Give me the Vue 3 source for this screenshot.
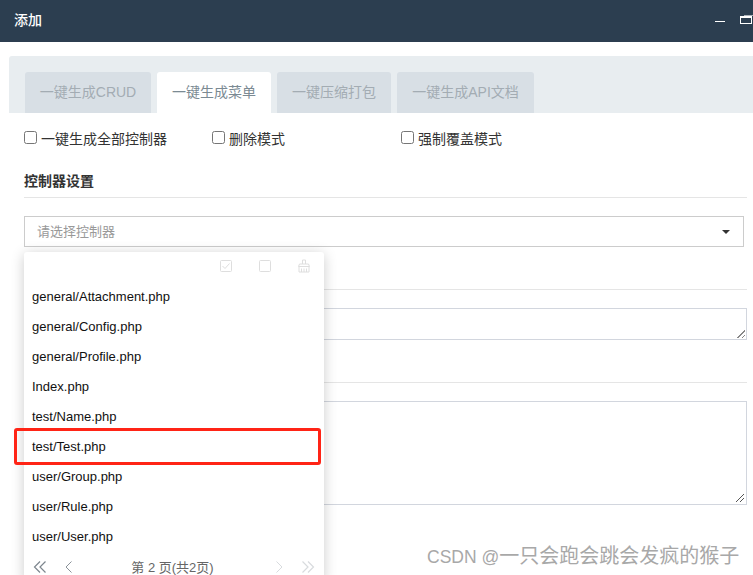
<script setup>
const tabs = [
  { label: '一键生成CRUD', w: 126 },
  { label: '一键生成菜单', w: 114, active: true },
  { label: '一键压缩打包', w: 114 },
  { label: '一键生成API文档', w: 137 },
]
const options = [
  { label: '一键生成全部控制器', w: 188 },
  { label: '删除模式', w: 189 },
  { label: '强制覆盖模式', w: 120 },
]
const files = [
  'general/Attachment.php',
  'general/Config.php',
  'general/Profile.php',
  'Index.php',
  'test/Name.php',
  'test/Test.php',
  'user/Group.php',
  'user/Rule.php',
  'user/User.php',
]
</script>

<template>
  <div class="page">
    <header class="titlebar">
      <span class="title">添加</span>
      <div class="win-btns">
        <span class="win-min"></span>
        <span class="win-max"></span>
      </div>
    </header>

    <main class="panel">
      <nav class="tabs">
        <div
          v-for="t in tabs"
          :key="t.label"
          class="tab"
          :class="{ active: t.active }"
          :style="{ width: t.w + 'px' }"
        >{{ t.label }}</div>
      </nav>

      <div class="body">
        <div class="checks">
          <label v-for="o in options" :key="o.label" class="check" :style="{ width: o.w + 'px' }">
            <span class="box"></span>{{ o.label }}
          </label>
        </div>

        <h4 class="section first">控制器设置</h4>
        <div class="select">
          <span class="placeholder">请选择控制器</span>
          <i class="caret"></i>
        </div>

        <div class="rule rule-a"></div>
        <div class="field short"></div>
        <div class="rule rule-b"></div>
        <div class="field tall">
          <svg class="grip" width="10" height="10" viewBox="0 0 10 10">
            <path d="M1 9 9 1M5 9 9 5" stroke="#555" stroke-width="1" fill="none" />
          </svg>
        </div>

        <div class="dropdown">
          <div class="tools">
            <svg width="14" height="14" viewBox="0 0 14 14" fill="none" stroke="#dedede">
              <rect x="1.5" y="1.5" width="11" height="11" rx="1" />
              <path d="M3.5 7 6 9.5l4.5-5" />
            </svg>
            <svg width="14" height="14" viewBox="0 0 14 14" fill="none" stroke="#dedede">
              <rect x="1.5" y="1.5" width="11" height="11" rx="1" />
            </svg>
            <svg width="14" height="14" viewBox="0 0 14 14" fill="none" stroke="#dedede">
              <path d="M5.5 5V1h3V5M1.5 7.5 2.5 5h9l1 2.5zM2 7.5V13h10V7.5M4.5 9.5V13M7 9.5V13M9.5 9.5V13" />
            </svg>
          </div>
          <ul class="list">
            <li v-for="f in files" :key="f">{{ f }}</li>
          </ul>
          <div class="pager">
            <div class="pager-group">
              <svg width="14" height="14" viewBox="0 0 14 14" fill="none" stroke="#7d868e" stroke-width="1.2">
                <path d="M7 1.5 1.5 7 7 12.5M12.5 1.5 7 7l5.5 5.5" />
              </svg>
              <svg width="14" height="14" viewBox="0 0 14 14" fill="none" stroke="#8a9299">
                <path d="M9.5 1.5 4 7l5.5 5.5" />
              </svg>
            </div>
            <span class="pager-text">第 2 页(共2页)</span>
            <div class="pager-group">
              <svg width="14" height="14" viewBox="0 0 14 14" fill="none" stroke="#d8dbde">
                <path d="M4.5 1.5 10 7l-5.5 5.5" />
              </svg>
              <svg width="14" height="14" viewBox="0 0 14 14" fill="none" stroke="#d8dbde" stroke-width="1.2">
                <path d="M1.5 1.5 7 7l-5.5 5.5M7 1.5 12.5 7 7 12.5" />
              </svg>
            </div>
          </div>
        </div>
      </div>
    </main>

    <div class="mark"></div>
    <div class="watermark"><span class="wm-latin">CSDN @</span>一只会跑会跳会发疯的猴子</div>
  </div>
</template>

<style>
html, body { margin: 0; background: #fff; overflow: hidden; }
</style>

<style scoped>
.page {
  position: relative;
  width: 753px;
  height: 575px;
  overflow: hidden;
  background: #fff;
  font-family: "Liberation Sans", "Noto Sans CJK SC", sans-serif;
  font-size: 14px;
  color: #333;
}
.titlebar {
  height: 42px;
  background: #2c3e50;
  display: flex;
  align-items: center;
  justify-content: space-between;
  padding-left: 14px;
}
.title { color: #fff; font-size: 14px; font-weight: 500; line-height: 38px; margin-top: -3px; }
.win-btns { display: flex; align-items: flex-start; gap: 15px; width: 38px; height: 10px; margin-top: -2px; }
.win-min { width: 10px; height: 1px; margin-top: 6px; flex: none; background: #fff; }
.win-max {
  position: relative;
  width: 10px;
  height: 5px;
  flex: none;
  margin-top: 1px;
  border: 1px solid #fff;
  border-top-width: 2px;
}
.win-max::before {
  content: "";
  position: absolute;
  left: 3px;
  top: -3px;
  width: 12px;
  height: 1px;
  background: #aab2ba;
}
.panel { margin: 14px 0 0 9px; }
.tabs {
  height: 57px;
  box-sizing: border-box;
  padding: 16px 0 0 16px;
  background: #e8edf0;
  border-radius: 3px 0 0 0;
  display: flex;
  gap: 6px;
}
.tab {
  height: 41px;
  box-sizing: border-box;
  background: #d8dfe5;
  color: #a3acb3;
  border-radius: 3px 3px 0 0;
  text-align: center;
  line-height: 41px;
}
.tab.active { background: #fff; color: #7b8a93; }
.body { position: relative; padding: 0 0 0 15px; }
.checks { display: flex; padding-top: 15px; height: 19px; }
.check { display: flex; align-items: center; height: 19px; color: #333; white-space: nowrap; }
.box {
  width: 11px;
  height: 11px;
  border: 1px solid #767676;
  border-radius: 2.5px;
  margin-right: 4px;
  flex: none;
}
.section {
  margin: 0;
  font-size: 14px;
  font-weight: 700;
  color: #333;
}
.section.first {
  margin-top: 21px;
  height: 29px;
  line-height: 26px;
  border-bottom: 1px solid #e5e5e5;
  width: 723px;
}
.select {
  margin-top: 18px;
  width: 720px;
  height: 31px;
  box-sizing: border-box;
  border: 1px solid #ccc;
  display: flex;
  align-items: center;
  justify-content: space-between;
  padding: 0 12px;
  font-size: 13px;
  color: #999;
}
.placeholder { margin-top: -2px; }
.caret {
  width: 0;
  height: 0;
  border-left: 4px solid transparent;
  border-right: 4px solid transparent;
  border-top: 4px solid #333;
  margin-right: 1px;
}
.rule { height: 1px; background: #e5e5e5; width: 723px; }
.rule-a { margin-top: 42px; }
.rule-b { margin-top: 42px; }
.field { box-sizing: border-box; border: 1px solid #d2d6de; width: 723px; position: relative; }
.short { margin-top: 18px; height: 32px; }
.short::after {
  content: "";
  position: absolute;
  right: 1px;
  bottom: 1px;
  width: 8px;
  height: 8px;
  background: linear-gradient(135deg, transparent 50%, #888 50%, #888 58%, transparent 58%, transparent 76%, #888 76%, #888 84%, transparent 84%);
}
.tall { margin-top: 18px; height: 104px; }
.grip { position: absolute; right: 1px; bottom: 1px; }
.dropdown {
  position: absolute;
  left: 15px;
  top: 139px;
  width: 300px;
  background: #fff;
  border-radius: 3px;
  box-shadow: 0 2px 14px rgba(0, 0, 0, 0.2);
  color: #111;
}
.tools {
  height: 28px;
  padding-bottom: 2px;
  display: flex;
  justify-content: flex-end;
  align-items: center;
  gap: 25px;
  padding-right: 13px;
}
.list { list-style: none; margin: 0; padding: 0; }
.list li {
  height: 30px;
  line-height: 30px;
  padding-left: 8px;
  font-size: 13px;
}
.pager {
  height: 30px;
  display: flex;
  align-items: center;
  justify-content: space-between;
  padding: 0 9px 0 9px;
}
.pager-group { display: flex; gap: 15px; }
.pager-text { font-size: 13px; color: #666; margin: -2px 0 0 -3px; }
.mark {
  position: absolute;
  left: 14px;
  top: 428px;
  width: 307px;
  height: 37px;
  box-sizing: border-box;
  border: 3px solid #ff2416;
  border-radius: 3px;
}
.watermark {
  position: absolute;
  left: 427px;
  top: 543px;
  font-size: 20px;
  line-height: 26px;
  color: #a8a8a8;
  text-shadow: 0 0 1px #fff;
  white-space: nowrap;
}
.wm-latin { font-size: 17.5px; }
</style>
